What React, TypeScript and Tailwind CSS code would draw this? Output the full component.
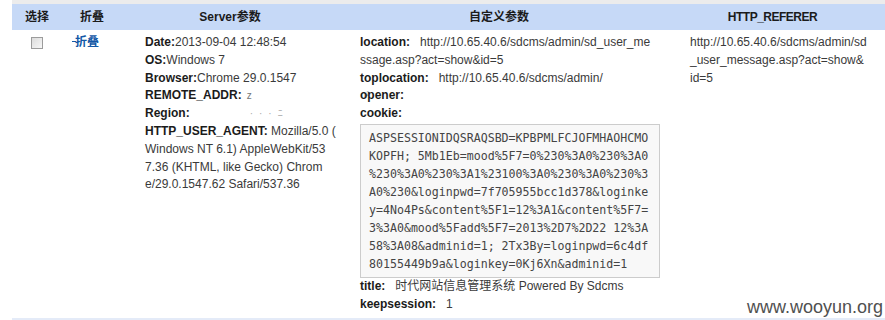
import React from "react";

const Label = ({ children }: { children: React.ReactNode }) => (
  <span className="font-bold text-[#1b1b1b]">{children}</span>
);

const cookieLines = [
  "ASPSESSIONIDQSRAQSBD=KPBPMLFCJOFMHAOHCMO",
  "KOPFH; 5Mb1Eb=mood%5F7=0%230%3A0%230%3A0",
  "%230%3A0%230%3A1%23100%3A0%230%3A0%230%3",
  "A0%230&loginpwd=7f705955bcc1d378&loginke",
  "y=4No4Ps&content%5F1=12%3A1&content%5F7=",
  "3%3A0&mood%5Fadd%5F7=2013%2D7%2D22 12%3A",
  "58%3A08&adminid=1; 2Tx3By=loginpwd=6c4df",
  "80155449b9a&loginkey=0Kj6Xn&adminid=1",
];

const App = () => {
  return (
    <div className="relative w-[885px] h-[320px] overflow-hidden bg-white font-['Liberation_Sans','Noto_Sans_CJK_SC',sans-serif] text-[12px] text-[#3a3a3a]">
      <div className="ml-[12px]">
        <div className="h-[4px] bg-[#ececec]" />

        {/* header */}
        <div className="grid grid-cols-[50px_60px_216px_322px_1fr] h-[26px] bg-[#c6d9f7] items-center text-center font-bold text-[#1b1b1b]">
          <div>选择</div>
          <div>折叠</div>
          <div>Server参数</div>
          <div>自定义参数</div>
          <div className="tracking-[-0.5px]">HTTP_REFERER</div>
        </div>

        {/* row */}
        <div className="grid grid-cols-[50px_60px_216px_322px_1fr] h-[290px] border-b-2 border-[#e4ebf8] leading-[17.8px]">
          <div className="flex justify-center pt-[7px]">
            <span className="w-[12px] h-[12px] border border-[#9c9c9c] bg-gradient-to-br from-[#dcdcdc] to-[#f7f7f7]" />
          </div>

          <div className="pt-[34px] -mt-[30px] pl-[10px]">
            <a className="font-bold text-[#1358a6] flex items-center">
              <span className="inline-block w-[4px] h-[1.5px] bg-[#1358a6] -mr-[1px] -mt-[3px]" />
              折叠
            </a>
          </div>

          <div className="pt-[4px] pl-[23px] whitespace-nowrap">
            <div><Label>Date:</Label>2013-09-04 12:48:54</div>
            <div><Label>OS:</Label>Windows 7</div>
            <div><Label>Browser:</Label>Chrome 29.0.1547</div>
            <div className="flex">
              <Label>REMOTE_ADDR:</Label>
              <span className="ml-[5px] text-[10px] text-[#777]">z</span>
              <span className="ml-[112px] text-[9px] text-[#999]">ı²</span>
            </div>
            <div className="flex">
              <Label>Region:</Label>
              <span className="ml-[60px] text-[10px] text-[#aaa] tracking-[6px]">···ﾆ</span>
            </div>
            <div><Label>HTTP_USER_AGENT:</Label> Mozilla/5.0 (</div>
            <div>Windows NT 6.1) AppleWebKit/53</div>
            <div>7.36 (KHTML, like Gecko) Chrom</div>
            <div>e/29.0.1547.62 Safari/537.36</div>
          </div>

          <div className="pt-[4px] pl-[22px] whitespace-nowrap">
            <div><Label>location:</Label>{"\u00a0\u00a0 "}http://10.65.40.6/sdcms/admin/sd_user_me</div>
            <div>ssage.asp?act=show&amp;id=5</div>
            <div><Label>toplocation:</Label>{"\u00a0\u00a0 "}http://10.65.40.6/sdcms/admin/</div>
            <div><Label>opener:</Label></div>
            <div><Label>cookie:</Label></div>
            <div className="mt-[1px] w-[300px] border border-[#cccccc] bg-[#f8f8f8] px-[8px] py-[4px] font-['DejaVu_Sans_Mono',monospace] text-[11.6px] leading-[18px] text-[#444]">
              {cookieLines.map((l) => (
                <div key={l} className="whitespace-pre">{l}</div>
              ))}
            </div>
            <div><Label>title:</Label>{"\u00a0\u00a0 "}时代网站信息管理系统 Powered By Sdcms</div>
            <div><Label>keepsession:</Label>{"\u00a0\u00a0 "}1</div>
          </div>

          <div className="pt-[4px] pl-[30px] whitespace-nowrap">
            <div>http://10.65.40.6/sdcms/admin/sd</div>
            <div>_user_message.asp?act=show&amp;</div>
            <div>id=5</div>
          </div>
        </div>
      </div>

      {/* watermark */}
      <div className="absolute left-[747px] top-[296px] text-[18px] leading-[22px] text-[#505050]">
        www.wooyun.org
      </div>
    </div>
  );
};

export default App;
